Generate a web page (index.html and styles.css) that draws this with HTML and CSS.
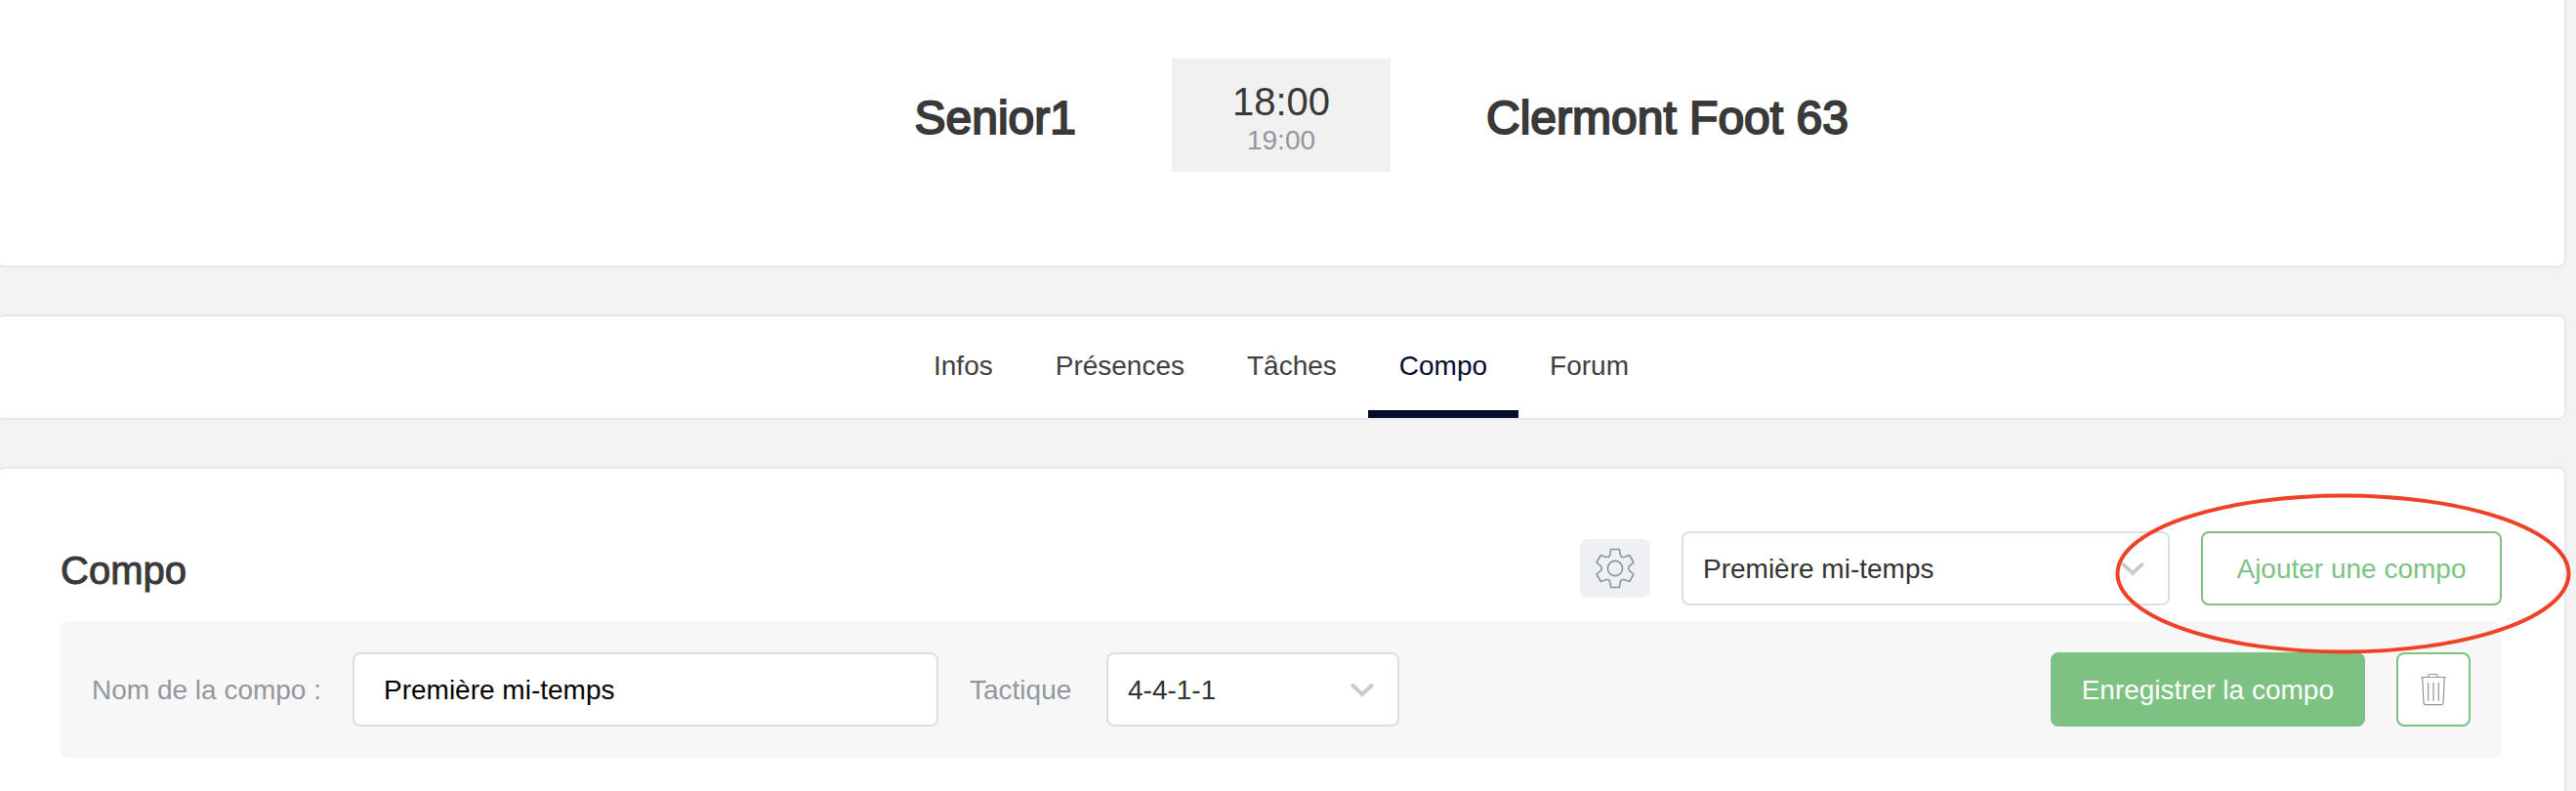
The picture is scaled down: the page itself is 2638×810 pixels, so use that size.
FILE: index.html
```html
<!DOCTYPE html>
<html lang="fr">
<head>
<meta charset="utf-8">
<meta name="viewport" content="width=device-width, initial-scale=1">
<title>Compo</title>
<link rel="stylesheet" href="styles.css">
</head>
<body>
<main class="page">
  <header class="panel match">
    <h1 class="team team-home">Senior1</h1>
    <div class="score">
      <div class="score-main">18:00</div>
      <div class="score-sub">19:00</div>
    </div>
    <h1 class="team">Clermont Foot 63</h1>
  </header>

  <nav class="panel tabs">
    <a class="tab" href="#infos">Infos</a>
    <a class="tab" href="#presences">Présences</a>
    <a class="tab" href="#taches">Tâches</a>
    <a class="tab tab-active" href="#compo" aria-current="page">Compo</a>
    <a class="tab" href="#forum">Forum</a>
  </nav>

  <section class="panel compo" id="compo">
    <div class="compo-head">
      <h2 class="compo-title">Compo</h2>
      <button class="gear" type="button" aria-label="Réglages">
        <svg width="42" height="42" viewBox="-21 -21 42 42" fill="none" stroke="#8e949b" stroke-width="1.6" stroke-linejoin="round" aria-hidden="true">
          <path d="M-4.3-19.5L4.3-19.5L5.2-14.5Q6-10.4 10-11.8L14.7-13.5L19-6L15.2-2.8Q12 0 15.2 2.8L19 6L14.7 13.5L10 11.8Q6 10.4 5.2 14.5L4.3 19.5L-4.3 19.5L-5.2 14.5Q-6 10.4 -10 11.8L-14.7 13.5L-19 6L-15.2 2.8Q-12 0 -15.2-2.8L-19-6L-14.7-13.5L-10-11.8Q-6-10.4 -5.2-14.5Z"/>
          <circle r="7.6"/>
        </svg>
      </button>
      <div class="select select-compo">
        <select class="field" aria-label="Choisir une compo"><option>Première mi-temps</option></select>
        <svg class="chevron" width="24" height="16" viewBox="0 0 24 16" fill="none" stroke="#cbcbcb" stroke-width="4" stroke-linecap="round" aria-hidden="true"><path d="M2.5 3L12 12L21.500 3"/></svg>
      </div>
      <div class="add">
        <button class="btn btn-outline" type="button">Ajouter une compo</button>
        <svg class="ring" viewBox="0 0 467 165" fill="none" stroke="#ee4126" stroke-width="4" aria-hidden="true"><ellipse cx="233.500" cy="82.500" rx="231" ry="80"/></svg>
      </div>
    </div>

    <form class="toolbar">
      <label class="label" for="nom">Nom de la compo :</label>
      <input class="field field-name" id="nom" type="text" value="Première mi-temps">
      <label class="label" for="tactique">Tactique</label>
      <div class="select select-tactic">
        <select class="field" id="tactique"><option>4-4-1-1</option></select>
        <svg class="chevron" width="24" height="16" viewBox="0 0 24 16" fill="none" stroke="#cbcbcb" stroke-width="4" stroke-linecap="round" aria-hidden="true"><path d="M2.5 3L12 12L21.500 3"/></svg>
      </div>
      <button class="btn btn-solid" type="button">Enregistrer la compo</button>
      <button class="btn btn-icon" type="button" aria-label="Supprimer la compo">
        <svg width="28" height="34" viewBox="143 117 84 102" fill="none" stroke="#8e949b" stroke-width="3.600" aria-hidden="true">
          <path d="M147 130.500H223M169 130V127Q169 121.500 174 121.500H193Q198 121.500 198 127V130M151 131L155 209Q156 215 161 215H209Q214 215 215 209L219 131M169 147V203M185 147V203M201 147V203"/>
        </svg>
      </button>
    </form>
  </section>
</main>
</body>
</html>
```
FILE: styles.css
```css
* { box-sizing: border-box; }

body {
  margin: 0;
  background: #f3f3f3;
  color: #393939;
  font-family: "Liberation Sans", Arial, sans-serif;
  font-size: 28px;
  line-height: 32px;
  overflow-x: hidden;
}

h1, h2 { margin: 0; font-weight: 400; }

button, input, select { font: inherit; margin: 0; }

.page {
  display: flex;
  flex-direction: column;
  gap: 48px;
  min-height: 100vh;
  margin: 0 10px 0 -4px;
}

.panel {
  background: #fff;
  border: 2px solid #e4e9ee;
  border-radius: 8px;
}

/* Match header */
.match {
  display: grid;
  grid-template-columns: 1fr 224px 1fr;
  align-items: center;
  gap: 98px;
  padding: 60px 0 96px;
  border-top: 0;
  border-radius: 0 0 8px 8px;
}

.team {
  padding-top: 6px;
  font-size: 48px;
  line-height: 56px;
  -webkit-text-stroke: 2px currentColor;
}

.team-home { text-align: right; }

.score {
  padding: 20px 0 16px;
  background: #f1f1f1;
  text-align: center;
}

.score-main { font-size: 40px; line-height: 48px; }
.score-sub { color: #92979f; }

/* Tabs */
.tabs {
  display: flex;
  justify-content: center;
}

.tab {
  padding: 35px 32px 29px;
  border-bottom: 8px solid transparent;
  color: #404040;
  text-decoration: none;
}

.tab-active {
  border-color: #040c2b;
  color: #040c2b;
}

/* Composition */
.compo {
  flex: 1;
  padding: 64px;
  border-bottom: 0;
  border-radius: 8px 8px 0 0;
}

.compo-head {
  display: flex;
  align-items: center;
  gap: 32px;
  margin-bottom: 16px;
}

.compo-title {
  flex: 1;
  padding-top: 4px;
  font-size: 40px;
  line-height: 48px;
  -webkit-text-stroke: 1px currentColor;
}

.gear {
  display: flex;
  align-items: center;
  justify-content: center;
  width: 72px;
  height: 60px;
  padding: 0;
  border: 0;
  border-radius: 8px;
  background: #eef0f4;
}

.field {
  width: 100%;
  height: 76px;
  padding: 2px 20px 0;
  border: 2px solid #dadfe7;
  border-radius: 8px;
  background: #fff;
  color: #333;
  appearance: none;
}

.field-name {
  width: 600px;
  padding: 2px 30px 0;
  color: #000;
}

.select { position: relative; }
.select-compo { width: 500px; }
.select-tactic { width: 300px; }

.chevron {
  position: absolute;
  top: 31px;
  right: 26px;
  pointer-events: none;
}

.btn {
  display: flex;
  align-items: center;
  justify-content: center;
  height: 76px;
  padding: 2px 30px 0;
  border: 2px solid #7dc283;
  border-radius: 8px;
  white-space: nowrap;
}

.btn-outline {
  min-width: 308px;
  background: #fff;
  color: #7dc283;
}

.btn-solid {
  margin-left: auto;
  background: #7dc283;
  color: #fff;
}

.btn-icon {
  width: 76px;
  padding: 0;
  background: #fff;
}

.add { position: relative; }

.ring {
  position: absolute;
  top: -39px;
  left: -88px;
  z-index: 1;
  width: 467px;
  height: 165px;
  pointer-events: none;
}

.toolbar {
  display: flex;
  align-items: center;
  gap: 32px;
  padding: 32px;
  border-radius: 8px;
  background: #f7f7f7;
}

.label {
  min-width: 108px;
  padding-top: 2px;
  color: #92979f;
  white-space: nowrap;
}
```
